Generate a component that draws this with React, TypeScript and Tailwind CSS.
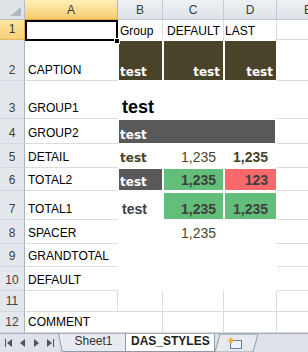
import React from 'react';

// Column widths: row header, A, B, C, D, E (rest)
const LABEL = "font-['Liberation_Sans',Arial,sans-serif]";
const DEJA = "font-['DejaVu_Sans',Verdana,sans-serif]";
const GRID = 'border-[#dadcdd]';

function RowHead({ n, active = false }: { n: number; active?: boolean }) {
  return (
    <div
      className={`w-[25px] shrink-0 flex items-end justify-center pb-[4px] text-[12px] leading-none border-r border-b ${
        active
          ? 'bg-gradient-to-b from-[#fbe6a0] to-[#f7cf79] border-r-[#e2a844] border-b-[#e9b865] text-[#3a3a3a]'
          : 'bg-[#e4e8ed] border-r-[#a9b4c1] border-b-[#d3d8de] text-[#3d3d3d]'
      }`}
    >
      {n}
    </div>
  );
}

function Label({ children, bottom = true }: { children?: React.ReactNode; bottom?: boolean }) {
  return (
    <div
      className={`w-[93px] shrink-0 flex items-end pl-[3px] pb-[4px] text-[12px] leading-none text-black ${
        bottom ? `border-b ${GRID}` : ''
      }`}
    >
      {children}
    </div>
  );
}

function ECell({ right = false }: { right?: boolean }) {
  return <div className={`flex-1 border-b ${GRID} ${right ? 'border-l' : ''}`} />;
}

export default function App() {
  return (
    <div className={`w-[308px] h-[352px] overflow-hidden bg-white relative flex flex-col ${LABEL}`}>
      {/* column headers */}
      <div className="h-[20px] flex shrink-0 text-[12px] leading-none text-[#3b3b3b]">
        <div className="w-[25px] shrink-0 bg-[#dfe3e8] border-r border-b border-[#b4bdc8] relative">
          <svg className="absolute right-[3px] bottom-[3px]" width="11" height="9" viewBox="0 0 11 9">
            <polygon points="11,0 11,9 0,9" fill="#b3b9c1" />
          </svg>
        </div>
        <div className="w-[93px] shrink-0 flex items-center justify-center pt-[1px] bg-gradient-to-b from-[#fdf0b8] to-[#f6cb6c] border-r border-r-[#d6b36a] border-b border-b-[#e2a23c]">
          A
        </div>
        <div className="w-[45px] shrink-0 flex items-center justify-center pt-[1px] bg-gradient-to-b from-[#eef1f4] to-[#dde2e8] border-r border-b border-[#c3cad3]">
          B
        </div>
        <div className="w-[61px] shrink-0 flex items-center justify-center pt-[1px] bg-gradient-to-b from-[#eef1f4] to-[#dde2e8] border-r border-b border-[#c3cad3]">
          C
        </div>
        <div className="w-[53px] shrink-0 flex items-center justify-center pt-[1px] bg-gradient-to-b from-[#eef1f4] to-[#dde2e8] border-r border-b border-[#c3cad3]">
          D
        </div>
        <div className="flex-1 flex items-center pl-[27px] pt-[1px] bg-gradient-to-b from-[#eef1f4] to-[#dde2e8] border-b border-[#c3cad3] overflow-hidden">
          E
        </div>
      </div>

      {/* row 1 */}
      <div className="h-[20px] flex shrink-0">
        <RowHead n={1} active />
        <Label bottom={false} />
        <div className={`w-[45px] shrink-0 flex items-end pl-[2px] pb-[3px] text-[12px] leading-none border-r ${GRID}`}>Group</div>
        <div className={`w-[61px] shrink-0 flex items-end pl-[4px] pb-[3px] text-[12px] leading-none border-r ${GRID}`}>DEFAULT</div>
        <div className={`w-[53px] shrink-0 flex items-end pl-[1px] pb-[3px] text-[12px] leading-none border-r ${GRID}`}>LAST</div>
        <ECell />
      </div>

      {/* row 2 */}
      <div className="h-[41px] flex shrink-0">
        <RowHead n={2} />
        <Label>CAPTION</Label>
        <div className="w-[45px] shrink-0 p-px">
          <div className={`h-full bg-[#494429] flex items-end pl-[1px] pb-[2px] text-[12px] leading-none font-bold text-white ${DEJA}`}>test</div>
        </div>
        <div className="w-[61px] shrink-0 p-px">
          <div className={`h-full bg-[#494429] flex items-end justify-end pr-[3px] pb-[2px] text-[12px] leading-none font-bold text-white ${DEJA}`}>test</div>
        </div>
        <div className="w-[53px] shrink-0 p-px">
          <div className={`h-full bg-[#494429] flex items-end justify-end pr-[3px] pb-[2px] text-[12px] leading-none font-bold text-white ${DEJA}`}>test</div>
        </div>
        <ECell />
      </div>

      {/* row 3 */}
      <div className="h-[38px] flex shrink-0">
        <RowHead n={3} />
        <Label>GROUP1</Label>
        <div className="w-[159px] shrink-0 flex items-end pl-[4px] pb-[3px] text-[18px] leading-none font-bold text-black">test</div>
        <ECell />
      </div>

      {/* row 4 */}
      <div className="h-[25px] flex shrink-0">
        <RowHead n={4} />
        <Label>GROUP2</Label>
        <div className="w-[159px] shrink-0 p-px pr-[2px]">
          <div className={`h-full bg-[#595959] flex items-end pl-[1px] pb-[2px] text-[12px] leading-none font-bold text-white ${DEJA}`}>test</div>
        </div>
        <ECell />
      </div>

      {/* row 5 */}
      <div className="h-[24px] flex shrink-0">
        <RowHead n={5} />
        <Label>DETAIL</Label>
        <div className={`w-[45px] shrink-0 flex items-end pl-[2px] pb-[4px] text-[12px] leading-none font-bold text-[#494429] ${DEJA}`}>test</div>
        <div className="w-[61px] shrink-0 flex items-end justify-end pr-[8px] pb-[4px] text-[14px] leading-none text-[#4b4630]">1,235</div>
        <div className="w-[53px] shrink-0 flex items-end justify-end pr-[9px] pb-[4px] text-[14px] leading-none font-bold text-[#494429]">1,235</div>
        <ECell />
      </div>

      {/* row 6 */}
      <div className="h-[23px] flex shrink-0">
        <RowHead n={6} />
        <Label>TOTAL2</Label>
        <div className="w-[45px] shrink-0 p-px">
          <div className={`h-full bg-[#595959] flex items-end pl-[1px] pb-[2px] text-[12px] leading-none font-bold text-white ${DEJA}`}>test</div>
        </div>
        <div className="w-[61px] shrink-0 p-px">
          <div className="h-full bg-[#63be7b] flex items-end justify-end pr-[7px] pb-[3px] text-[14px] leading-none font-bold text-[#3f3f3f]">1,235</div>
        </div>
        <div className="w-[53px] shrink-0 p-px">
          <div className="h-full bg-[#f8696b] flex items-end justify-end pr-[8px] pb-[3px] text-[14px] leading-none font-bold text-[#3f3f3f]">123</div>
        </div>
        <ECell />
      </div>

      {/* row 7 */}
      <div className="h-[29px] flex shrink-0">
        <RowHead n={7} />
        <Label>TOTAL1</Label>
        <div className="w-[45px] shrink-0 flex items-end pl-[4px] pb-[4px] text-[14px] leading-none font-bold text-[#404040]">test</div>
        <div className="w-[61px] shrink-0 p-px pt-[2px]">
          <div className="h-full bg-[#63be7b] flex items-end justify-end pr-[7px] pb-[3px] text-[14px] leading-none font-bold text-[#3f3f3f]">1,235</div>
        </div>
        <div className="w-[53px] shrink-0 p-px pt-[2px]">
          <div className="h-full bg-[#63be7b] flex items-end justify-end pr-[8px] pb-[3px] text-[14px] leading-none font-bold text-[#3f3f3f]">1,235</div>
        </div>
        <ECell />
      </div>

      {/* row 8 */}
      <div className="h-[24px] flex shrink-0">
        <RowHead n={8} />
        <Label>SPACER</Label>
        <div className="w-[45px] shrink-0" />
        <div className="w-[61px] shrink-0 flex items-end justify-end pr-[8px] pb-[4px] text-[14px] leading-none text-[#4b4630]">1,235</div>
        <div className="w-[53px] shrink-0" />
        <ECell />
      </div>

      {/* row 9 */}
      <div className="h-[23px] flex shrink-0">
        <RowHead n={9} />
        <Label>GRANDTOTAL</Label>
        <div className="w-[159px] shrink-0" />
        <ECell />
      </div>

      {/* row 10 */}
      <div className="h-[24px] flex shrink-0">
        <RowHead n={10} />
        <Label>DEFAULT</Label>
        <div className="w-[159px] shrink-0" />
        <ECell />
      </div>

      {/* row 11 */}
      <div className="h-[21px] flex shrink-0">
        <RowHead n={11} />
        <div className={`w-[93px] shrink-0 border-r border-b ${GRID}`} />
        <div className={`w-[45px] shrink-0 border-r border-b ${GRID}`} />
        <div className={`w-[61px] shrink-0 border-r border-b ${GRID}`} />
        <div className={`w-[53px] shrink-0 border-r border-b ${GRID}`} />
        <ECell />
      </div>

      {/* row 12 */}
      <div className="h-[21px] flex shrink-0">
        <RowHead n={12} />
        <Label>COMMENT</Label>
        <div className={`w-[45px] shrink-0 border-r border-b ${GRID}`} />
        <div className={`w-[61px] shrink-0 border-r border-b ${GRID}`} />
        <div className={`w-[53px] shrink-0 border-r border-b ${GRID}`} />
        <ECell />
      </div>

      {/* sheet tabs */}
      <div className="flex-1 flex bg-[#dfe3e9] border-t border-[#a4adb9] text-[12px] leading-none">
        <div className="w-[62px] shrink-0 flex items-center gap-[7px] pl-[5px] text-[#555]">
          <svg width="7" height="8" viewBox="0 0 7 8"><rect x="0" y="0" width="1" height="8" fill="#4d5560" /><polygon points="7,0 7,8 2,4" fill="#4d5560" /></svg>
          <svg width="7" height="8" viewBox="0 0 7 8"><polygon points="6,0 6,8 1,4" fill="#4d5560" /></svg>
          <svg width="7" height="8" viewBox="0 0 7 8"><polygon points="1,0 1,8 6,4" fill="#4d5560" /></svg>
          <svg width="7" height="8" viewBox="0 0 7 8"><polygon points="0,0 0,8 5,4" fill="#4d5560" /><rect x="6" y="0" width="1" height="8" fill="#4d5560" /></svg>
        </div>
        <div className="w-[64px] shrink-0 relative flex items-end justify-center pb-[4px] text-[#333] bg-[#e8ebef] border-r border-b border-[#8e9aa8]">
          <svg className="absolute left-[-4px] top-0" width="5" height="19" viewBox="0 0 5 19"><polygon points="0,0 5,0 5,19 4,19" fill="#e8ebef" /><line x1="0.5" y1="0" x2="4.5" y2="19" stroke="#8e9aa8" /></svg>
          Sheet1
        </div>
        <div className="w-[89px] shrink-0 flex items-end pl-[5px] pb-[4px] font-bold text-[#1e1e1e] bg-white border-r border-b border-[#8e9aa8]">
          DAS_STYLES
        </div>
        <div className="w-[44px] shrink-0 relative">
          <svg className="absolute left-0 top-0" width="44" height="19" viewBox="0 0 44 19">
            <polygon points="0,18 5,0 43,0 38,18" fill="#e6eaee" stroke="#8e9aa8" />
          </svg>
          <svg className="absolute left-[12px] top-[3px]" width="16" height="13" viewBox="0 0 16 13">
            <rect x="3.5" y="3.5" width="11" height="8" fill="#eef3fa" stroke="#5f7fa8" />
            <circle cx="4" cy="3.5" r="2.2" fill="#f6b42c" />
            <path d="M4 0v1.2M4 5.8v1.2M0.5 3.5h1.2M6.3 3.5h1.2" stroke="#f39a1a" strokeWidth="0.8" />
          </svg>
        </div>
        <div className="flex-1" />
      </div>

      {/* selection box on A1 */}
      <div className="absolute left-[25px] top-[20px] w-[93px] h-[21px] border-2 border-black pointer-events-none" />
      <div className="absolute left-[114px] top-[38px] w-[6px] h-[6px] bg-black border border-white" />
    </div>
  );
}
